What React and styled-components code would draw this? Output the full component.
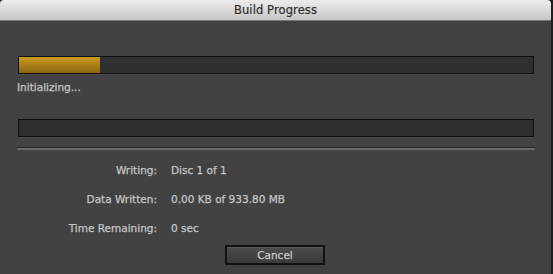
import { Fragment } from "react";
import styled, { createGlobalStyle } from "styled-components";

const GlobalStyle = createGlobalStyle`
  html, body {
    margin: 0;
    padding: 0;
    background: #1e1e1e;
  }
  body {
    font-family: "DejaVu Sans", "Liberation Sans", sans-serif;
  }
`;

const Window = styled.div`
  width: 551px;
  height: 274px;
  background: #424242;
  display: flex;
  flex-direction: column;
  overflow: hidden;
  border-radius: 4px 4px 0 0;
`;

const TitleBar = styled.div`
  height: 20px;
  flex-shrink: 0;
  background: linear-gradient(#ececec, #c6c6c6);
  border-bottom: 1px solid #7a7a7a;
  display: flex;
  align-items: center;
  justify-content: center;
  font-size: 11.5px;
  color: #2e2e2e;
  -webkit-text-stroke: 0.2px #2e2e2e;
  letter-spacing: 0.1px;
`;

const Body = styled.div`
  padding: 35px 17px 0 18px;
  display: flex;
  flex-direction: column;
`;

const Track = styled.div`
  height: 16px;
  width: 514px;
  background: #303030;
  border: 1px solid #0e0e0e;
  box-shadow: 0 1px 0 #4c4c4c;
  display: flex;
`;

const Fill = styled.div`
  height: 100%;
  background: linear-gradient(#cc9a22, #8d6412);
`;

const Text = styled.div`
  font-size: 10.5px;
  color: #c6c6c6;
  -webkit-text-stroke: 0.25px #c6c6c6;
`;

const Status = styled(Text)`
  margin: 7px 0 0 -1px;
  height: 14px;
`;

const Spacer = styled.div`
  height: ${(p) => p.$h}px;
`;

const Divider = styled.div`
  margin: 10px 0 0 -1px;
  width: 518px;
  height: 1px;
  background: #262626;
  border-bottom: 2px solid #6a6a6a;
`;

const InfoGrid = styled(Text)`
  display: grid;
  grid-template-columns: 139px auto;
  column-gap: 14px;
  row-gap: 15px;
  margin-top: 13px;
  line-height: 14px;
`;

const Label = styled.div`
  text-align: right;
`;

const Value = styled.div``;

const Footer = styled.div`
  display: flex;
  justify-content: center;
  margin-top: 10px;
  padding-right: 2px;
`;

const Button = styled.button`
  width: 100px;
  height: 20px;
  padding: 0;
  border: 2px solid #111;
  background: linear-gradient(#4c4c4c, #3a3a3a);
  color: #c8c8c8;
  -webkit-text-stroke: 0.25px #c8c8c8;
  font-family: "DejaVu Sans", "Liberation Sans", sans-serif;
  font-size: 10.5px;
  box-shadow: inset 0 1px 0 #5a5a5a;
`;

const rows = [
  ["Writing:", "Disc 1 of 1"],
  ["Data Written:", "0.00 KB of 933.80 MB"],
  ["Time Remaining:", "0 sec"],
];

export default function App() {
  const progress = 81;
  return (
    <>
      <GlobalStyle />
      <Window>
        <TitleBar>Build Progress</TitleBar>
        <Body>
          <Track>
            <Fill style={{ width: `${progress}px` }} />
          </Track>
          <Status>Initializing...</Status>
          <Spacer $h={24} />
          <Track />
          <Divider />
          <InfoGrid>
            {rows.map(([label, value]) => (
              <Fragment key={label}>
                <Label>{label}</Label>
                <Value>{value}</Value>
              </Fragment>
            ))}
          </InfoGrid>
          <Footer>
            <Button>Cancel</Button>
          </Footer>
        </Body>
      </Window>
    </>
  );
}
